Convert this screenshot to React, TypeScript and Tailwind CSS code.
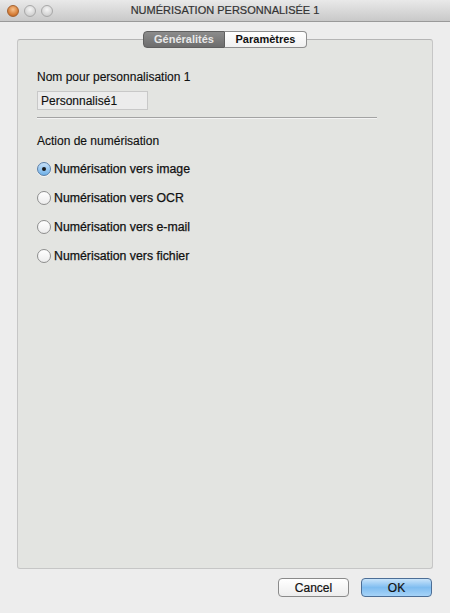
import React from "react";

const font = { fontFamily: '"Liberation Sans", Arial, sans-serif' };

function Radio({ checked, label }: { checked?: boolean; label: string }) {
  return (
    <div className="flex items-center h-[16px]">
      {checked ? (
        <div className="w-[14px] h-[14px] rounded-full border border-[#5a7fa8] bg-gradient-to-b from-[#c6e0f7] to-[#6fb1e8] flex items-center justify-center shadow-[0_1px_0_rgba(255,255,255,0.6)]">
          <div className="w-[4px] h-[4px] rounded-full bg-[#1a1a1a]" />
        </div>
      ) : (
        <div className="w-[14px] h-[14px] rounded-full border border-[#8e8e8e] bg-gradient-to-b from-[#ffffff] to-[#ececec]" />
      )}
      <span className="ml-[3px] text-[12.3px] text-[#111] [-webkit-text-stroke:0.25px_#111]">{label}</span>
    </div>
  );
}

export default function App() {
  return (
    <div style={font} className="w-[450px] h-[613px] bg-[#ededed] flex flex-col overflow-hidden relative">
      {/* Title bar */}
      <div className="h-[22px] bg-gradient-to-b from-[#e9e9e9] to-[#c9c9c9] border-b border-[#9a9a9a] flex items-center relative">
        <div className="flex items-center gap-[5px] pl-[7px]">
          <div className="w-[12px] h-[12px] rounded-full bg-[radial-gradient(circle_at_50%_35%,#f7c28d,#d1752d_70%,#9c5322)] border border-[#a46231]" />
          <div className="w-[12px] h-[12px] rounded-full bg-[radial-gradient(circle_at_50%_35%,#f5f5f5,#d2d2d2_70%,#b4b4b4)] border border-[#a8a8a8]" />
          <div className="w-[12px] h-[12px] rounded-full bg-[radial-gradient(circle_at_50%_35%,#f5f5f5,#d2d2d2_70%,#b4b4b4)] border border-[#a8a8a8]" />
        </div>
        <div className="absolute inset-0 flex items-center justify-center text-[11px] text-[#333] [-webkit-text-stroke:0.2px_#333]">
          NUMÉRISATION PERSONNALISÉE 1
        </div>
      </div>

      {/* Content */}
      <div className="flex-1 flex flex-col px-[17px] pt-[9px]">
        <div className="relative flex-1 flex flex-col">
          {/* Tabs */}
          <div className="flex justify-center relative z-10 h-[17px]">
            <div className="w-[82px] h-[17px] rounded-l-[4px] border border-[#5f5f5f] bg-gradient-to-b from-[#8c8c8c] to-[#6d6d6d] text-[#e8e8e8] text-[11px] font-bold flex items-center justify-center">
              Généralités
            </div>
            <div className="w-[82px] h-[17px] rounded-r-[4px] border border-l-0 border-[#8e8e8e] bg-gradient-to-b from-[#ffffff] to-[#f0f0f0] text-[#111] text-[11px] font-bold flex items-center justify-center">
              Paramètres
            </div>
          </div>
          <div className="-mt-[9px] flex-1 border border-[#c6c6c6] border-t-[#b5b5b5] rounded-[3px] bg-[#e3e4e1] pl-[19px] pr-[55px] pt-[29px]">
            <div className="text-[12px] text-[#111] leading-[16px] [-webkit-text-stroke:0.15px_#111]">Nom pour personnalisation 1</div>
            <div className="mt-[6px] w-[111px] h-[19px] bg-[#ececec] border border-[#c8c8c8] text-[12px] text-[#111] flex items-center pl-[3px] [-webkit-text-stroke:0.15px_#111]">
              Personnalisé1
            </div>
            <div className="mt-[7px] h-[2px] border-t border-[#a3a3a3] border-b border-b-[#f3f3f3]" />
            <div className="mt-[14px] text-[12px] text-[#111] leading-[16px] [-webkit-text-stroke:0.15px_#111]">Action de numérisation</div>
            <div className="mt-[12px] flex flex-col gap-[13px]">
              <Radio checked label="Numérisation vers image" />
              <Radio label="Numérisation vers OCR" />
              <Radio label="Numérisation vers e-mail" />
              <Radio label="Numérisation vers fichier" />
            </div>
          </div>
        </div>
        {/* Buttons */}
        <div className="h-[44px] flex justify-end items-start pt-[9px] gap-[12px] pr-[1px]">
          <button className="w-[71px] h-[19px] rounded-[4px] border border-[#8a8a8a] bg-gradient-to-b from-[#ffffff] to-[#ededed] text-[12px] text-[#111] flex items-center justify-center [-webkit-text-stroke:0.2px_#111]">
            Cancel
          </button>
          <button className="w-[71px] h-[19px] rounded-[4px] border border-[#4c6e96] bg-gradient-to-b from-[#c9e4fa] via-[#7fbdf0] to-[#a6d3f8] text-[12px] text-[#111] flex items-center justify-center [-webkit-text-stroke:0.2px_#111]">
            OK
          </button>
        </div>
      </div>
    </div>
  );
}
